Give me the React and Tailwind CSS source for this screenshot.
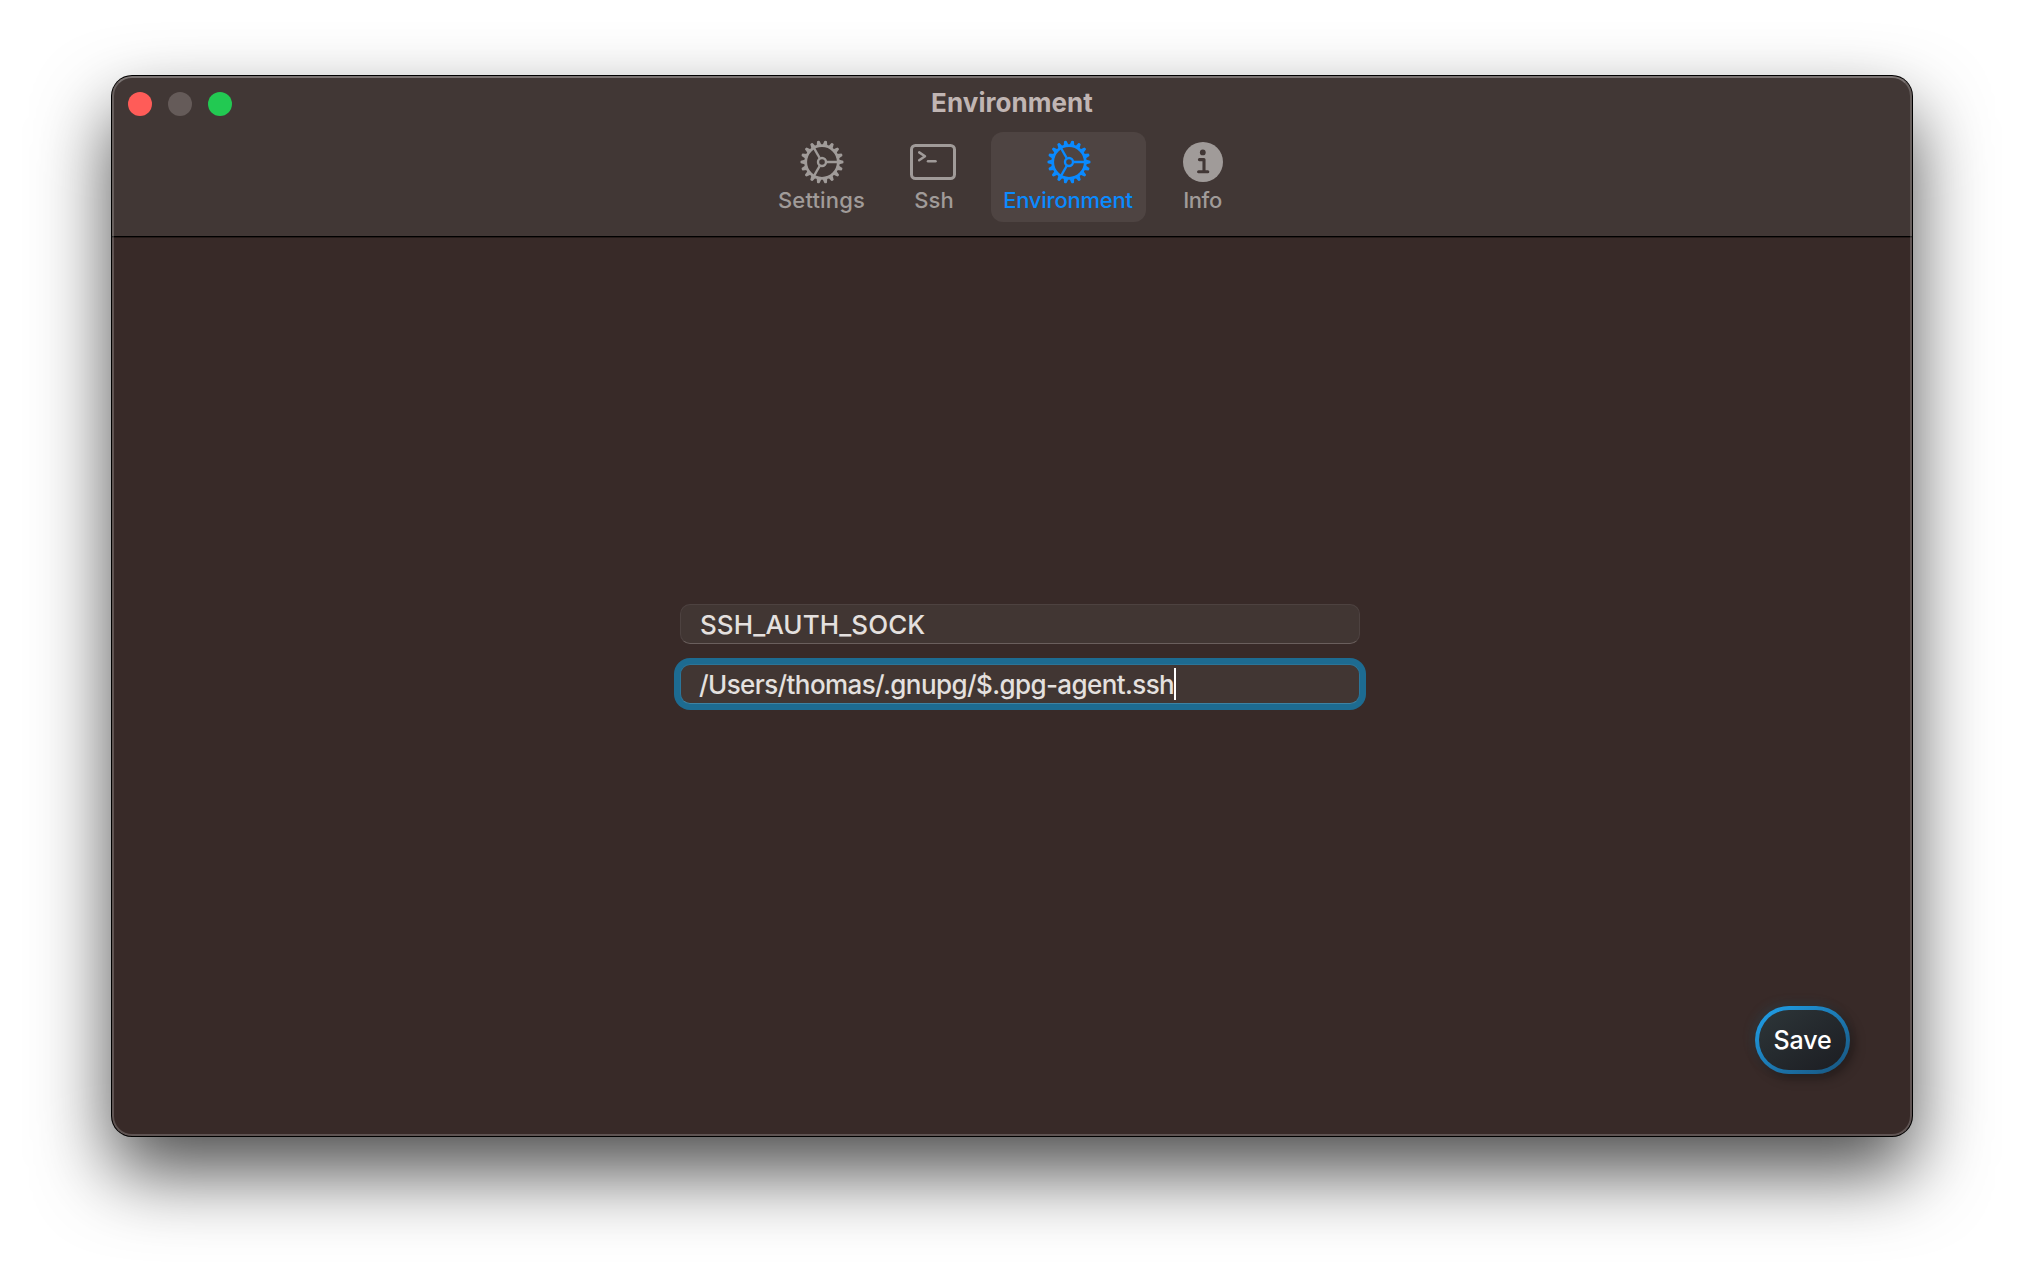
import React from "react";

const TEETH = Array.from({ length: 18 }, (_, i) => i * 20);

function GearIcon() {
  return (
    <svg width="44" height="44" viewBox="-22 -22 44 44" fill="none" stroke="currentColor">
      {TEETH.map((a) => (
        <path key={a} d="M16.5 -2.5 L21.2 -1.3 Q22 0 21.2 1.3 L16.5 2.5 Z" fill="currentColor" stroke="none" transform={`rotate(${a})`} />
      ))}
      <circle r="16.3" strokeWidth="2.8" />
      <circle r="4" strokeWidth="2.4" />
      {[0, 120, 240].map((a) => (
        <path key={a} d="M4.8 0 H16" strokeWidth="2.3" transform={`rotate(${a})`} />
      ))}
    </svg>
  );
}

function TerminalIcon() {
  return (
    <svg className="mr-0.5" width="46" height="36" viewBox="0 0 46 36" fill="none" stroke="currentColor" strokeLinecap="round" strokeLinejoin="round">
      <rect x="1.5" y="1.5" width="43" height="33" rx="4" strokeWidth="3" />
      <path d="M9.2 8.4 L15 12.3 L9.2 16.2" strokeWidth="2.5" />
      <path d="M18 17.3 H25.5" strokeWidth="2.5" />
    </svg>
  );
}

function InfoIcon() {
  return (
    <svg width="40" height="40" viewBox="0 0 40 40">
      <circle cx="20" cy="20" r="20" fill="currentColor" />
      <circle cx="19.8" cy="10.4" r="2.9" fill="#413735" />
      <path d="M16.4 17.6 H21 V29.8 M15.6 29.8 H24.8" fill="none" stroke="#413735" strokeWidth="3.1" strokeLinecap="round" strokeLinejoin="round" />
    </svg>
  );
}

function Tab({ icon, label, width, tracking, active }) {
  return (
    <button
      className={`flex h-[90px] flex-col items-center rounded-xl pt-2 ${width} ${
        active ? "bg-[#4e4442] text-[#0a8aff]" : "text-[#a09b99]"
      }`}
    >
      <span className="flex h-11 items-center justify-center">{icon}</span>
      <span className={`mt-0.5 text-[22px] leading-7 font-[450] whitespace-nowrap ${tracking}`}>{label}</span>
    </button>
  );
}

export default function App() {
  return (
    <div className="flex h-[1284px] w-[2024px] overflow-hidden bg-white pt-[76px] pl-[112px] font-[Inter,sans-serif]">
      <div className="relative flex h-[1060px] w-[1800px] flex-col overflow-hidden rounded-[20px] bg-[#382a28] shadow-[0_0_0_1px_#000,0_36px_76px_rgba(0,0,0,0.7)]">
        <header className="h-[161px] shrink-0 border-b border-black bg-[#413735]">
          <div className="grid h-14 grid-cols-3 items-center">
            <div className="flex gap-4 pl-4">
              <span className="size-6 rounded-full bg-[#ff5c58]" />
              <span className="size-6 rounded-full bg-[#655b59]" />
              <span className="size-6 rounded-full bg-[#22c952]" />
            </div>
            <h1 className="-mt-[3px] text-center text-[26px] leading-8 font-bold tracking-[0.06px] text-[#c0b5b3]">Environment</h1>
          </div>
          <nav className="flex gap-3 pl-[655px]">
            <Tab icon={<GearIcon />} label="Settings" width="w-[110px]" tracking="tracking-[0.16px] mr-px" />
            <Tab icon={<TerminalIcon />} label="Ssh" width="w-[90px]" tracking="tracking-normal" />
            <Tab icon={<GearIcon />} label="Environment" width="w-[155px]" tracking="tracking-[-0.22px] mr-px" active />
            <Tab icon={<InfoIcon />} label="Info" width="w-[90px]" tracking="tracking-[-0.4px] mr-px" />
          </nav>
        </header>

        <main className="flex grow flex-col border-t border-[#241a18] pt-[366px]">
          <div className="ml-[568px] flex w-[680px] flex-col gap-5 text-[26px] leading-8 font-[450] text-[#e4e0df]">
            <div className="flex h-10 items-center rounded-[10px] border border-[#4d4240] border-b-[#6a5f5d] bg-[#413633] pt-0.5 pl-[19px] tracking-[0.06px]">
              SSH_AUTH_SOCK
            </div>
            <div className="flex h-10 items-center rounded-[10px] border border-[#2a7599] border-b-[#3d83a4] bg-[#413633] pl-[18px] tracking-[-0.6px] ring-6 ring-[#1d6b91]">
              <span className="pt-0.5">/Users/thomas/.gnupg/$.gpg-agent.ssh</span>
              <span className="h-8 w-0.5 bg-white" />
            </div>
          </div>
          <button className="mt-[302px] mr-[62px] flex h-[68px] w-[95px] self-end rounded-full bg-linear-to-br from-[#1fa3ee] to-[#17537c] p-1 shadow-[4px_4px_12px_rgba(0,0,0,0.35),-3px_-3px_10px_rgba(40,90,110,0.25)]">
            <span className="flex size-full items-center justify-center rounded-full bg-linear-to-br from-[#2d3639] to-[#1c1d22] pt-0.5 text-[25px] font-medium tracking-[-0.12px] text-white">
              Save
            </span>
          </button>
        </main>
        <div className="pointer-events-none absolute inset-0 rounded-[20px] border-2 border-white/20 border-t-white/30" />
      </div>
    </div>
  );
}
